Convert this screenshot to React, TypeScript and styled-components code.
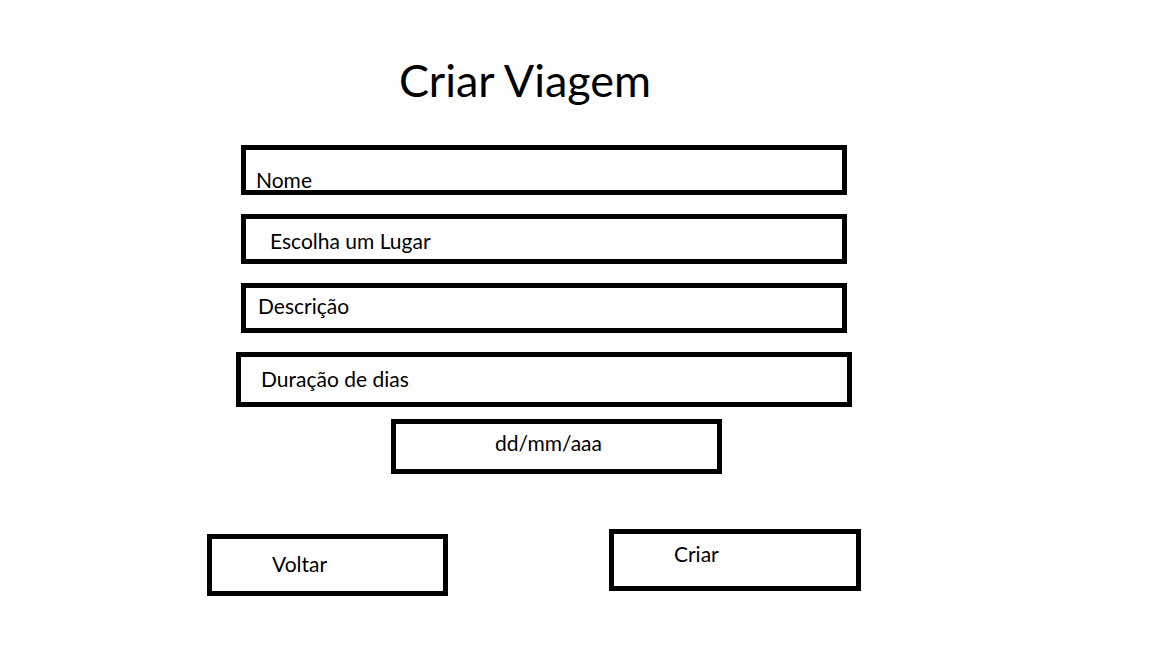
import React from "react";
import styled, { createGlobalStyle } from "styled-components";

const GlobalStyle = createGlobalStyle`
  *, *::before, *::after { box-sizing: border-box; }
  body {
    margin: 0;
    background: #fff;
    color: #000;
    font-family: Lato, "Open Sans", sans-serif;
  }
`;

const Page = styled.main`
  display: grid;
  grid-template-columns: 207fr 654fr 291fr;
  padding: 52px 0;
`;

const Form = styled.form`
  grid-column: 2;
  display: flex;
  flex-direction: column;
`;

const Title = styled.h1`
  margin: 0 18px 37px 0;
  font-size: 45px;
  font-weight: 400;
  line-height: 56px;
  text-align: center;
`;

const Fields = styled.div`
  display: flex;
  flex-direction: column;
  gap: 19px;
`;

const FieldRow = styled.div<{ $wide?: boolean }>`
  display: flex;
  height: ${({ $wide }) => ($wide ? 55 : 50)}px;
  padding: ${({ $wide }) => ($wide ? "0 9px 0 29px" : "0 14px 0 34px")};
`;

const DateRow = styled.div`
  display: grid;
  grid-template-columns: 184fr 331fr 139fr;
  height: 55px;
  margin-top: 12px;

  > * { grid-column: 2; }
`;

const Actions = styled.div`
  display: grid;
  grid-template-columns: 241fr 161fr 252fr;
  height: 67px;
  margin-top: 55px;
`;

const Input = styled.input<{ $pad?: string; $center?: boolean }>`
  width: 100%;
  min-width: 0;
  height: 100%;
  margin: 0;
  padding: ${({ $pad }) => $pad ?? "0 12px"};
  border: 5px solid #000;
  border-radius: 0;
  background: #fff;
  color: #000;
  font: inherit;
  font-size: 21px;
  line-height: 20px;
  text-align: ${({ $center }) => ($center ? "center" : "left")};

  &::placeholder { color: #000; opacity: 1; }
`;

const Select = styled.select`
  width: 100%;
  height: 100%;
  margin: 0;
  padding: 2px 24px 0;
  border: 5px solid #000;
  border-radius: 0;
  background: #fff;
  color: #000;
  font: inherit;
  font-size: 21px;
  appearance: none;
`;

const Button = styled.button<{ $place: "start" | "end" }>`
  grid-column: ${({ $place }) => ($place === "end" ? 1 : 3)};
  grid-row: 1;
  align-self: ${({ $place }) => $place};
  height: 62px;
  margin: 0;
  padding: ${({ $place }) => ($place === "end" ? "0 60px 2px" : "0 60px 12px")};
  border: 5px solid #000;
  background: #fff;
  color: #000;
  font: inherit;
  font-size: 21px;
  line-height: 24px;
  text-align: left;
  cursor: pointer;
`;

export default function App() {
  return (
    <>
      <GlobalStyle />
      <Page>
        <Form onSubmit={(event) => event.preventDefault()}>
          <Title>Criar Viagem</Title>
          <Fields>
            <FieldRow>
              <Input aria-label="Nome" placeholder="Nome" $pad="18px 10px 0" />
            </FieldRow>
            <FieldRow>
              <Select aria-label="Escolha um Lugar" defaultValue="">
                <option value="">Escolha um Lugar</option>
              </Select>
            </FieldRow>
            <FieldRow>
              <Input aria-label="Descrição" placeholder="Descrição" $pad="0 12px 6px" />
            </FieldRow>
            <FieldRow $wide>
              <Input
                aria-label="Duração de dias"
                placeholder="Duração de dias"
                inputMode="numeric"
                $pad="0 20px 2px"
              />
            </FieldRow>
          </Fields>
          <DateRow>
            <Input aria-label="Data" placeholder="dd/mm/aaa" $pad="0 16px 8px 0" $center />
          </DateRow>
          <Actions>
            <Button type="button" $place="end">Voltar</Button>
            <Button type="submit" $place="start">Criar</Button>
          </Actions>
        </Form>
      </Page>
    </>
  );
}
